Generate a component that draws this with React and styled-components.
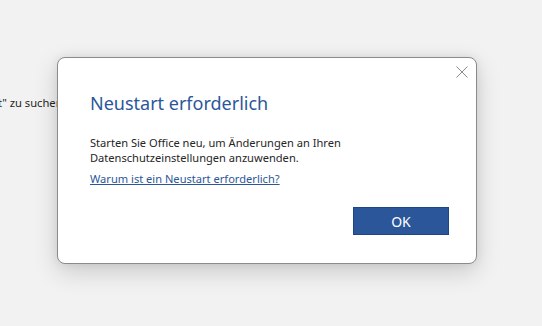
import styled, { createGlobalStyle } from "styled-components"

const Global = createGlobalStyle`
html, body {
margin: 0;
padding: 0;
}
body {
background: #f2f2f2;
font-family: "Segoe UI", "Noto Sans", "Liberation Sans", sans-serif;
}
`

const Page = styled.div`
position: relative;
width: 542px;
height: 326px;
overflow: hidden;
background: #f2f2f2;
`

const BehindText = styled.div`
padding-top: 95px;
margin-left: -2px;
font-size: 11.2px;
color: #262626;
white-space: nowrap;
`

const Dialog = styled.div`
position: absolute;
left: 57px;
top: 57px;
width: 420px;
height: 207px;
background: #fff;
border: 1px solid #8a8a8a;
border-radius: 8px;
box-shadow: 0 8px 24px rgba(0,0,0,0.16), 0 0 10px rgba(0,0,0,0.08);
display: flex;
flex-direction: column;
padding: 0 27px 0 32px;
box-sizing: border-box;
`

const Close = styled.button`
position: absolute;
top: 7px;
right: 7px;
width: 14px;
height: 14px;
padding: 0;
border: none;
background: transparent;
display: flex;
`

const Title = styled.h1`
margin: 34px 0 0 0;
font-size: 18px;
font-weight: 400;
color: #2b579a;
line-height: 23px;
`

const Body = styled.p`
margin: 20px 0 0 0;
font-size: 11.1px;
line-height: 15px;
color: #262626;
`

const Link = styled.a`
display: block;
margin-top: 6px;
font-size: 11.1px;
line-height: 15px;
color: #2b579a;
text-decoration: underline;
`

const Actions = styled.div`
display: flex;
justify-content: flex-end;
margin-top: auto;
margin-bottom: 28px;
`

const Button = styled.button`
width: 96px;
height: 28px;
background: #2b579a;
border: 1px solid #1d4684;
color: #fff;
font-family: inherit;
font-size: 14px;
padding: 0;
`

const App = () => {
  return (
    <Page>
      <Global />
      <BehindText>t" zu suchen</BehindText>
      <Dialog>
        <Close aria-label="Schließen">
          <svg width="14" height="14" viewBox="0 0 14 14">
            <path d="M1.5 1.5 L12.5 12.5 M12.5 1.5 L1.5 12.5" stroke="#8a8a8a" strokeWidth="1" fill="none" />
          </svg>
        </Close>
        <Title>Neustart erforderlich</Title>
        <Body>
          Starten Sie Office neu, um Änderungen an Ihren
          <br />
          Datenschutzeinstellungen anzuwenden.
        </Body>
        <Link href="#">Warum ist ein Neustart erforderlich?</Link>
        <Actions>
          <Button>OK</Button>
        </Actions>
      </Dialog>
    </Page>
  )
}

export default App
